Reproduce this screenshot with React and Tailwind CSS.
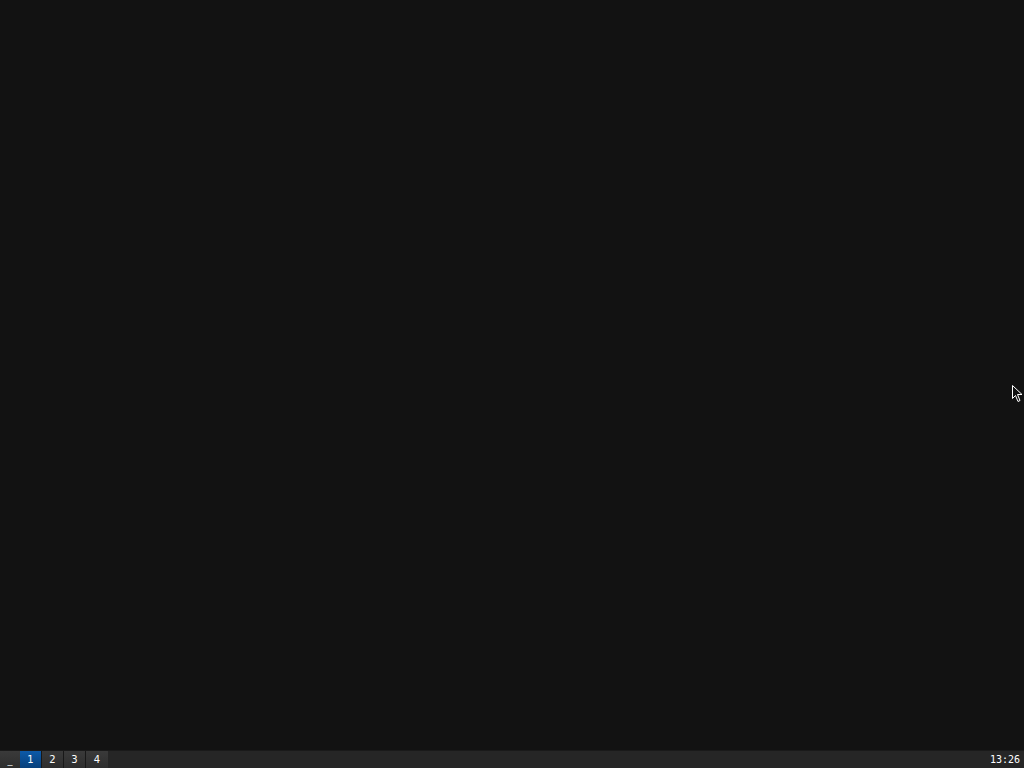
export default function App() {
  return (
    <div className="relative w-[1024px] h-[768px] bg-[#121212] flex flex-col overflow-hidden" style={{ fontFamily: '"DejaVu Sans", sans-serif' }}>
      <div className="flex-1" />
      <div className="h-[18px] flex items-stretch bg-[#262626] border-t border-[#1a1a1a] text-[10px] text-white leading-none">
        <div className="w-[20px] flex items-end justify-center pb-[3px] text-[#ddd] bg-gradient-to-b from-[#3a3a3a] to-[#2e2e2e]">_</div>
        <div className="w-[22px] flex items-center justify-center bg-gradient-to-b from-[#0d5aa8] to-[#07407c] border-r border-[#181818]">1</div>
        <div className="w-[22px] flex items-center justify-center bg-gradient-to-b from-[#3a3a3a] to-[#2e2e2e] border-r border-[#181818]">2</div>
        <div className="w-[22px] flex items-center justify-center bg-gradient-to-b from-[#3a3a3a] to-[#2e2e2e] border-r border-[#181818]">3</div>
        <div className="w-[22px] flex items-center justify-center bg-gradient-to-b from-[#3a3a3a] to-[#2e2e2e]">4</div>
        <div className="flex-1" />
        <div className="flex items-center pr-[4px]" style={{ fontFamily: '"DejaVu Sans Mono", monospace' }}>13:26</div>
      </div>
      <svg className="absolute left-[1012px] top-[385px]" width="12" height="18" viewBox="0 0 12 18">
        <path d="M0.5 0.5 L0.5 13.5 L3.5 10.5 L6 16.5 L8 15.5 L5.5 9.5 L10 9.5 Z" fill="#111" stroke="#fff" strokeWidth="1" />
      </svg>
    </div>
  );
}
